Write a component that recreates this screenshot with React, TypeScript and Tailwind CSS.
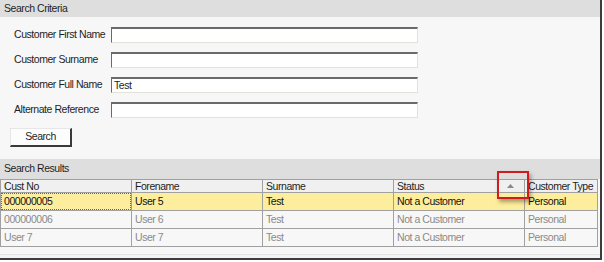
import React from 'react';

const fields = ['Customer First Name', 'Customer Surname', 'Customer Full Name', 'Alternate Reference'];
const values: Record<string, string> = { 'Customer Full Name': 'Test' };

const columns = [
  { name: 'Cust No', w: 'w-[131px]' },
  { name: 'Forename', w: 'w-[131px]' },
  { name: 'Surname', w: 'w-[131px]' },
  { name: 'Status', w: 'w-[131px]' },
  { name: 'Customer Type', w: 'flex-1' },
];

const rows = [
  ['000000005', 'User 5', 'Test', 'Not a Customer', 'Personal'],
  ['000000006', 'User 6', 'Test', 'Not a Customer', 'Personal'],
  ['User 7', 'User 7', 'Test', 'Not a Customer', 'Personal'],
];

export default function App() {
  return (
    <div
      className="w-[604px] h-[262px] bg-white text-[10.5px] tracking-[-0.45px] text-[#1e1e1e] overflow-hidden whitespace-nowrap"
      style={{ fontFamily: '"Liberation Sans", Arial, sans-serif' }}
    >
      <div className="relative w-[602px] h-[260px] flex flex-col bg-[#f7f7f7] border-r-2 border-b-2 border-[#3c3c3c]">
        {/* search criteria */}
        <div className="h-[17px] bg-[#dedede] px-[4px] flex items-center">Search Criteria</div>
        <div className="h-[142px] flex flex-col pt-[10px] pl-[10px]">
          <div className="flex flex-col gap-[9px]">
            {fields.map((f) => (
              <div key={f} className="flex items-center h-[16px]">
                <span className="w-[101px] shrink-0 pl-[4px]">{f}</span>
                <div className="w-[307px] h-[16px] bg-white border-t-2 border-l border-t-[#6a6a6a] border-l-[#6a6a6a] border-r border-b border-r-[#e2e2dc] border-b-[#e2e2dc] px-[2px] flex items-center leading-none">
                  {values[f] ?? ''}
                </div>
              </div>
            ))}
          </div>
          <button className="mt-[10px] w-[62px] h-[19px] bg-[#fcfcfc] border-t border-l border-[#e6e6e6] border-r-2 border-b-2 border-r-[#3a3a3a] border-b-[#3a3a3a] flex items-center justify-center">
            Search
          </button>
        </div>

        {/* search results */}
        <div className="h-[20px] bg-[#dedede] px-[4px] flex items-center">Search Results</div>
        <div className="flex flex-col border-r border-[#a0a0a0] mr-[2px]">
          <div className="flex h-[14px] bg-[#f0f0f0] border-t border-b border-[#a0a0a0]">
            {columns.map((c, i) => (
              <div
                key={c.name}
                className={`${c.w} relative flex items-center px-[3px] border-l border-[#a0a0a0] leading-none overflow-hidden`}
              >
                {c.name}
                {i === 3 && (
                  <svg className="absolute right-[10px] top-[4px]" width="7" height="4" viewBox="0 0 7 4">
                    <polygon points="0,4 3.5,0 7,4" fill="#8a8a8a" />
                  </svg>
                )}
              </div>
            ))}
          </div>
          {rows.map((r, ri) => (
            <div
              key={ri}
              className={`flex h-[18px] border-b border-[#a0a0a0] ${ri === 0 ? 'bg-[#fdee9e] text-[#111]' : 'bg-[#f7f7f7] text-[#8a8a8a]'}`}
            >
              {r.map((cell, ci) => (
                <div
                  key={ci}
                  className={`${columns[ci].w} flex items-center border-l border-[#a0a0a0] leading-none`}
                >
                  {ri === 0 && ci === 0 ? (
                    <div className="w-full h-full px-[2px] flex items-center border border-dotted border-[#6a6a50]">
                      {cell}
                    </div>
                  ) : (
                    <span className="px-[3px]">{cell}</span>
                  )}
                </div>
              ))}
            </div>
          ))}
        </div>
        <div className="flex-1" />
        <div className="h-[4px] border-t border-[#e4e4e4] bg-[#f4f4f4]" />

        {/* callout box */}
        <div className="absolute left-[497px] top-[171px] w-[32px] h-[28px] border-2 border-[#d01c1c] shadow-[2px_3px_4px_rgba(0,0,0,0.35)]" />
      </div>
    </div>
  );
}
